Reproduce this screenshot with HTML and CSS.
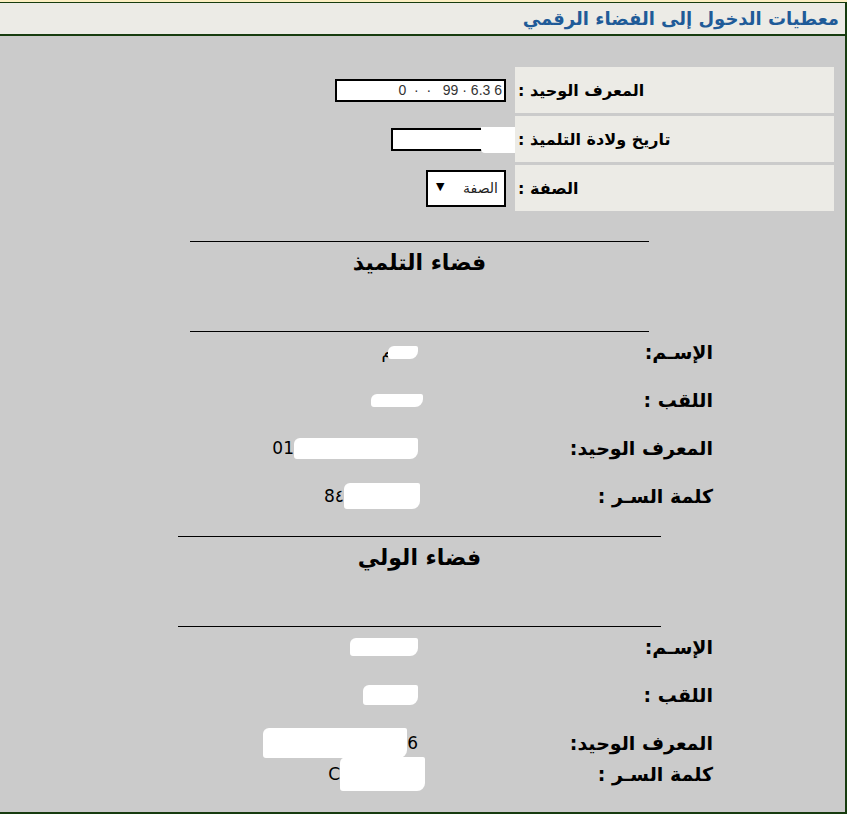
FILE: index.html
```html
<!DOCTYPE html>
<html lang="ar" dir="rtl">
<head>
    <meta charset="UTF-8">
    <meta name="viewport" content="width=device-width, initial-scale=1.0">
    <title>معطيات الدخول إلى الفضاء الرقمي</title>
    <link rel="stylesheet" href="styles.css">
</head>
<body>
    <div class="cadre">
        <div class="entete">معطيات الدخول إلى الفضاء الرقمي</div>

        <form class="connexion">
            <div class="lib">المعرف الوحيد :</div>
            <div class="champ"><input type="text" dir="ltr" class="id" value="0  ·  ·   99 · 6.3 6"></div>

            <div class="lib">تاريخ ولادة التلميذ :</div>
            <div class="champ"><span class="masque"><input type="text" dir="ltr" class="naiss" value=""></span></div>

            <div class="lib">الصفة :</div>
            <div class="champ">
                <span class="liste">
                    <select name="qualite">
                        <option>الصفة</option>
                        <option>الولي</option>
                    </select>
                </span>
            </div>
        </form>

        <div class="bloc eleve">
            <div class="trait"></div>
            <h2>فضاء التلميذ</h2>
            <div class="trait"></div>
            <div class="ligne">
                <div class="nom">الإسـم:</div>
                <div class="val"><span class="reste">م</span><span class="tache t1"></span></div>
            </div>
            <div class="ligne">
                <div class="nom">اللقب :</div>
                <div class="val"><span class="tache t2"></span></div>
            </div>
            <div class="ligne">
                <div class="nom">المعرف الوحيد:</div>
                <div class="val"><span>01</span><span class="tache t3"></span></div>
            </div>
            <div class="ligne">
                <div class="nom">كلمة السـر :</div>
                <div class="val"><span>8٤</span><span class="tache t4"></span></div>
            </div>
        </div>

        <div class="bloc parent">
            <div class="trait"></div>
            <h2>فضاء الولي</h2>
            <div class="trait"></div>
            <div class="ligne">
                <div class="nom">الإسـم:</div>
                <div class="val"><span class="tache t5"></span></div>
            </div>
            <div class="ligne">
                <div class="nom">اللقب :</div>
                <div class="val"><span class="tache t6"></span></div>
            </div>
            <div class="ligne courte">
                <div class="nom">المعرف الوحيد:</div>
                <div class="val"><span class="tache t7"></span><span>6</span></div>
            </div>
            <div class="ligne">
                <div class="nom">كلمة السـر :</div>
                <div class="val"><span>C</span><span class="tache t8"></span></div>
            </div>
        </div>
    </div>
</body>
</html>
```

FILE: styles.css
```css
body {
    margin: 0;
    padding-top: 2px;
    background-color: #fcefc2;
    font-family: "DejaVu Sans", sans-serif;
    color: #000;
}
.cadre {
    width: 847px;
    height: 812px;
    box-sizing: border-box;
    background-color: #cbcbcb;
    border-top: 1px solid #173c0f;
    border-right: 2px solid #173c0f;
    border-bottom: 2px solid #173c0f;
    overflow: hidden;
}
.entete {
    height: 31px;
    line-height: 31px;
    padding-right: 6px;
    background-color: #ecebe6;
    border-bottom: 2px solid #173c0f;
    color: #1f5b98;
    font-size: 18px;
    font-weight: bold;
}

/* formulaire d'acces */
.connexion {
    display: grid;
    grid-template-columns: 319px auto;
    grid-auto-rows: 46px;
    gap: 3px 9px;
    justify-content: start;
    margin: 31px 11px 0 0;
}
.lib {
    display: flex;
    align-items: center;
    justify-content: flex-end;
    padding-left: 3px;
    background-color: #ecebe6;
    font-size: 16px;
    font-weight: bold;
}
.champ {
    display: flex;
    align-items: center;
}
.champ input {
    height: 23px;
    box-sizing: border-box;
    border: 2px solid #000;
    background: #fff;
    padding: 0 2px;
    font-family: "Liberation Sans", sans-serif;
    font-size: 14px;
    text-align: right;
    color: #333;
}
.champ input.id {
    width: 171px;
}
.champ input.naiss {
    width: 115px;
}
.masque {
    position: relative;
    display: inline-block;
    height: 23px;
}
.masque:after {
    content: "";
    position: absolute;
    right: -9px;
    top: -1px;
    width: 34px;
    height: 26px;
    background: #fff;
    border-radius: 0 0 0 4px;
}
.liste {
    position: relative;
    display: inline-block;
}
.liste select {
    width: 80px;
    height: 37px;
    box-sizing: border-box;
    border: 2px solid #000;
    border-radius: 0;
    background: #fff;
    padding: 0 6px 0 22px;
    font-family: "DejaVu Sans", sans-serif;
    font-size: 14px;
    color: #222;
    appearance: none;
    -webkit-appearance: none;
}
.liste:after {
    content: "▼";
    position: absolute;
    left: 10px;
    top: 10px;
    font-size: 11px;
    pointer-events: none;
}

/* espaces eleve / parent */
.bloc {
    width: 483px;
    margin-left: 178px;
    margin-right: auto;
}
.eleve {
    margin-top: 30px;
}
.eleve .trait {
    margin: 0 12px;
}
.trait {
    border-top: 1px solid #000;
}
.bloc h2 {
    margin: 6px 0 53px;
    height: 30px;
    line-height: 30px;
    text-align: center;
    font-size: 22px;
    font-weight: bold;
}
.ligne {
    display: grid;
    grid-template-columns: 200px 300px;
    column-gap: 95px;
    height: 48px;
    margin-right: -52px;
    padding-top: 6px;
    box-sizing: border-box;
}
.eleve .ligne:last-child {
    height: 60px;
}
.ligne.courte {
    height: 31px;
}
.nom {
    height: 28px;
    line-height: 28px;
    font-size: 19px;
    font-weight: bold;
}
.val {
    display: flex;
    align-items: center;
    justify-content: flex-end;
    direction: ltr;
    height: 28px;
    font-size: 17px;
}
.tache {
    display: inline-block;
    background-color: #fff;
    border-radius: 6px 2px 8px 3px;
}
.reste {
    margin-right: -4px;
}
.t1 { width: 30px; height: 13px; }
.t2 { width: 52px; height: 13px; margin-right: -5px; }
.t3 { width: 124px; height: 21px; }
.t4 { width: 76px; height: 26px; margin-right: -2px; }
.t5 { width: 68px; height: 18px; }
.t6 { width: 55px; height: 20px; }
.t7 { width: 144px; height: 30px; }
.t8 { width: 85px; height: 34px; margin-right: -7px; }
```
